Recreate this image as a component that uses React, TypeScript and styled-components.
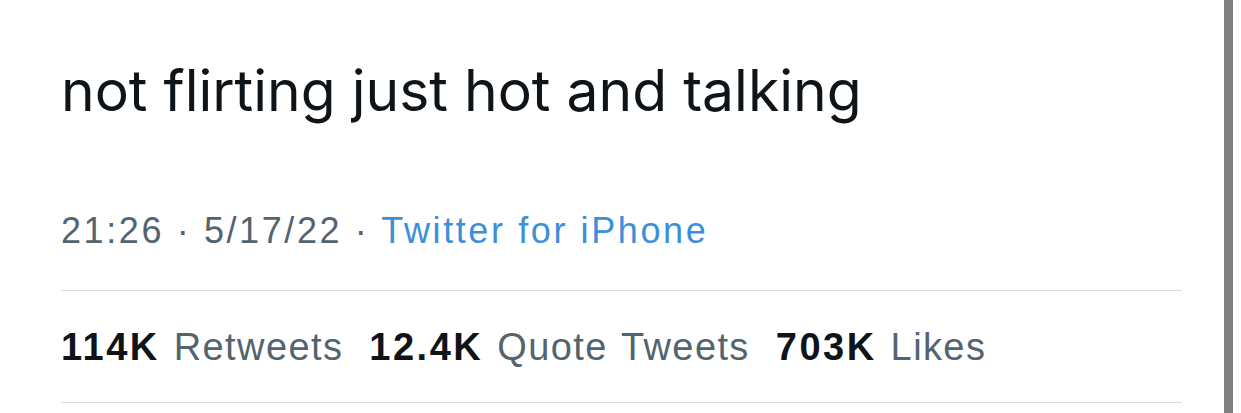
import React from "react";
import styled, { createGlobalStyle } from "styled-components";

const Global = createGlobalStyle`
  html, body { margin: 0; padding: 0; background: #ffffff; }
  body { width: 1241px; height: 413px; overflow: hidden; }
`;

const Page = styled.div`
  display: flex;
  width: 1241px;
  height: 413px;
  background: #ffffff;
`;

const Tweet = styled.main`
  width: 1224px;
  box-sizing: border-box;
  padding: 62px 42px 0 61px;
  display: flex;
  flex-direction: column;
`;

const Scrollbar = styled.div`
  width: 9px;
  height: 100%;
  background: #808080;
`;

const Body = styled.p`
  margin: 0;
  font-family: Inter, "Noto Sans", sans-serif;
  font-size: 57px;
  line-height: 57px;
  color: #0f1419;
`;

const Meta = styled.div`
  margin-top: 92px;
  font-family: "Liberation Sans", Arial, sans-serif;
  font-size: 36px;
  line-height: 40px;
  letter-spacing: 2.6px;
  color: #536471;
  white-space: nowrap;
`;

const Source = styled.span`
  color: #3d8fd8;
`;

const Divider = styled.hr<{ $top: number }>`
  margin: ${(p) => p.$top}px 0 0 0;
  border: 0;
  height: 1px;
  background: #dcdcdc;
`;

const Stats = styled.div`
  margin-top: 34px;
  display: flex;
  gap: 26px;
  font-family: "Liberation Sans", Arial, sans-serif;
  font-size: 38px;
  line-height: 44px;
  color: #536471;
`;

const Stat = styled.span`
  white-space: nowrap;
  letter-spacing: 1.4px;
  word-spacing: 2px;
`;

const Count = styled.b`
  font-weight: 700;
  letter-spacing: 2.5px;
  color: #0f1419;
`;

const stats = [
  { count: "114K", label: "Retweets" },
  { count: "12.4K", label: "Quote Tweets" },
  { count: "703K", label: "Likes" },
];

export default function App() {
  return (
    <>
      <Global />
      <Page>
        <Tweet>
          <Body>not flirting just hot and talking</Body>
          <Meta>
            21:26 · 5/17/22 · <Source>Twitter for iPhone</Source>
          </Meta>
          <Divider $top={39} />
          <Stats>
            {stats.map((s) => (
              <Stat key={s.label}>
                <Count>{s.count}</Count> {s.label}
              </Stat>
            ))}
          </Stats>
          <Divider $top={33} />
        </Tweet>
        <Scrollbar />
      </Page>
    </>
  );
}
